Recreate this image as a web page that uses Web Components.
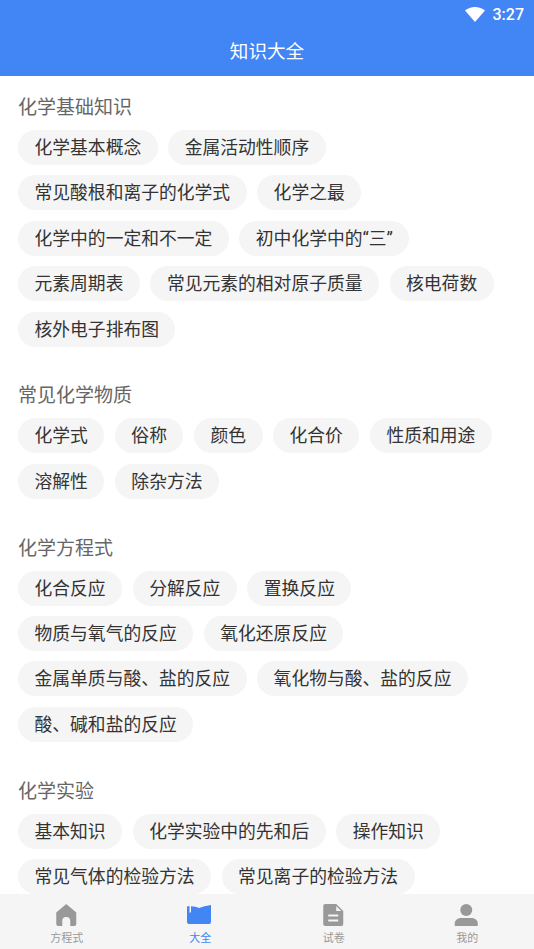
<!DOCTYPE html>
<html lang="zh"><head><meta charset="utf-8"><title>知识大全</title>
<style>
html,body{margin:0;padding:0;background:#fff}
body{font-family:Roboto,"Noto Sans CJK SC","Noto Sans",sans-serif}
</style></head><body>
<app-shell>
  <app-header slot="header" title="知识大全" time="3:27"></app-header>
  <know-section heading="化学基础知识" items="化学基本概念|金属活动性顺序|常见酸根和离子的化学式|化学之最|化学中的一定和不一定|初中化学中的“三”|元素周期表|常见元素的相对原子质量|核电荷数|核外电子排布图"></know-section>
  <know-section heading="常见化学物质" items="化学式|俗称|颜色|化合价|性质和用途|溶解性|除杂方法"></know-section>
  <know-section heading="化学方程式" items="化合反应|分解反应|置换反应|物质与氧气的反应|氧化还原反应|金属单质与酸、盐的反应|氧化物与酸、盐的反应|酸、碱和盐的反应"></know-section>
  <know-section heading="化学实验" items="基本知识|化学实验中的先和后|操作知识|常见气体的检验方法|常见离子的检验方法"></know-section>
  <tab-bar slot="footer"></tab-bar>
</app-shell>
<script>
class AppShell extends HTMLElement{constructor(){super();this.attachShadow({mode:'open'}).innerHTML=`<style>
:host{display:flex;flex-direction:column;width:534px;height:949px;overflow:hidden;background:#fff}
main{flex:1;min-height:0;overflow:hidden;padding-top:18px}
</style><slot name="header"></slot><main><slot></slot></main><slot name="footer"></slot>`}}
class AppHeader extends HTMLElement{connectedCallback(){this.attachShadow({mode:'open'}).innerHTML=`<style>
:host{display:block;height:76px;background:#4285f4;color:#fff;flex:none}
.status{height:28px;display:flex;justify-content:flex-end;align-items:center;gap:8px;padding-right:10px;font:500 16px Roboto,sans-serif}
svg{display:block}
h1{margin:0;font-weight:400;font-size:18.6px;line-height:48px;text-align:center}
</style><div class="status"><svg width="20" height="15" viewBox="0 0 20 15"><path d="M0 3.600C2.800 1.300 6.200 0 10 0s7.200 1.300 10 3.600L10 15z" fill="#fff"/></svg><span>${this.getAttribute('time')}</span></div><h1>${this.getAttribute('title')}</h1>`}}
class KnowSection extends HTMLElement{connectedCallback(){const items=this.getAttribute('items').split('|').map(t=>`<know-chip>${t}</know-chip>`).join('');this.attachShadow({mode:'open'}).innerHTML=`<style>
:host{display:block;padding:0 18px 35.800px}
h2{margin:0 0 10px;padding-top:2px;font-weight:400;font-size:19px;line-height:24px;color:#666}
.chips{display:flex;flex-wrap:wrap;gap:10.400px 10.500px}
</style><h2>${this.getAttribute('heading')}</h2><div class="chips">${items}</div>`}}
class KnowChip extends HTMLElement{constructor(){super();this.attachShadow({mode:'open'}).innerHTML=`<style>
:host{display:block;height:35px;line-height:35px;padding:0 16.500px;border-radius:18px;background:#f5f5f5;color:#333;font-size:17.800px;white-space:nowrap}
</style><slot></slot>`}}
const icons={
home:`<svg width="24" height="24" viewBox="0.75 0 24 24"><path d="M12 1 22 9.500V21a2 2 0 0 1-2 2H16v-5a4 4 0 0 0-8 0v5H4a2 2 0 0 1-2-2V9.500z" fill="currentColor"/></svg>`,
book:`<svg width="24" height="24" viewBox="1 0 24 24"><path d="M0 3.500Q1 3 2.500 3V9.500H4V3.200Q9 3.500 12 5Q17 3 24 2V19a2 2 0 0 1-2 2H2a2 2 0 0 1-2-2z" fill="currentColor"/></svg>`,
doc:`<svg width="24" height="24" viewBox="0.75 0 24 24"><path d="M4 1h11l7 7v13a2 2 0 0 1-2 2H4a2 2 0 0 1-2-2V3a2 2 0 0 1 2-2z" fill="currentColor"/><path d="M15 3 20 8h-5z" fill="#f5f5f5"/><path d="M7 12.500h10M7 17.500h10" stroke="#f5f5f5" stroke-width="2" fill="none"/></svg>`,
user:`<svg width="24" height="24" viewBox="0.75 0 24 24"><circle cx="12" cy="7" r="6" fill="currentColor"/><path d="M.5 20c0-2.500 3-5 6-5h11c3 0 6 2.500 6 5v3H.5z" fill="currentColor"/></svg>`};
class TabItem extends HTMLElement{connectedCallback(){this.attachShadow({mode:'open'}).innerHTML=`<style>
:host{flex:1;display:flex;flex-direction:column;align-items:center;color:#999}
:host([active]){color:#4285f4}
svg{display:block;margin-top:9px;overflow:visible}
span{font-size:11px;line-height:16px;margin-top:4px}
</style>${icons[this.getAttribute('icon')]}<span><slot></slot></span>`}}
class TabBar extends HTMLElement{constructor(){super();this.attachShadow({mode:'open'}).innerHTML=`<style>
:host{display:flex;flex:none;height:55px;background:#f5f5f5;overflow:hidden}
</style><tab-item icon="home">方程式</tab-item><tab-item icon="book" active>大全</tab-item><tab-item icon="doc">试卷</tab-item><tab-item icon="user">我的</tab-item>`}}
customElements.define('tab-item',TabItem);customElements.define('tab-bar',TabBar);customElements.define('know-chip',KnowChip);customElements.define('know-section',KnowSection);customElements.define('app-header',AppHeader);customElements.define('app-shell',AppShell);
</script></body></html>
